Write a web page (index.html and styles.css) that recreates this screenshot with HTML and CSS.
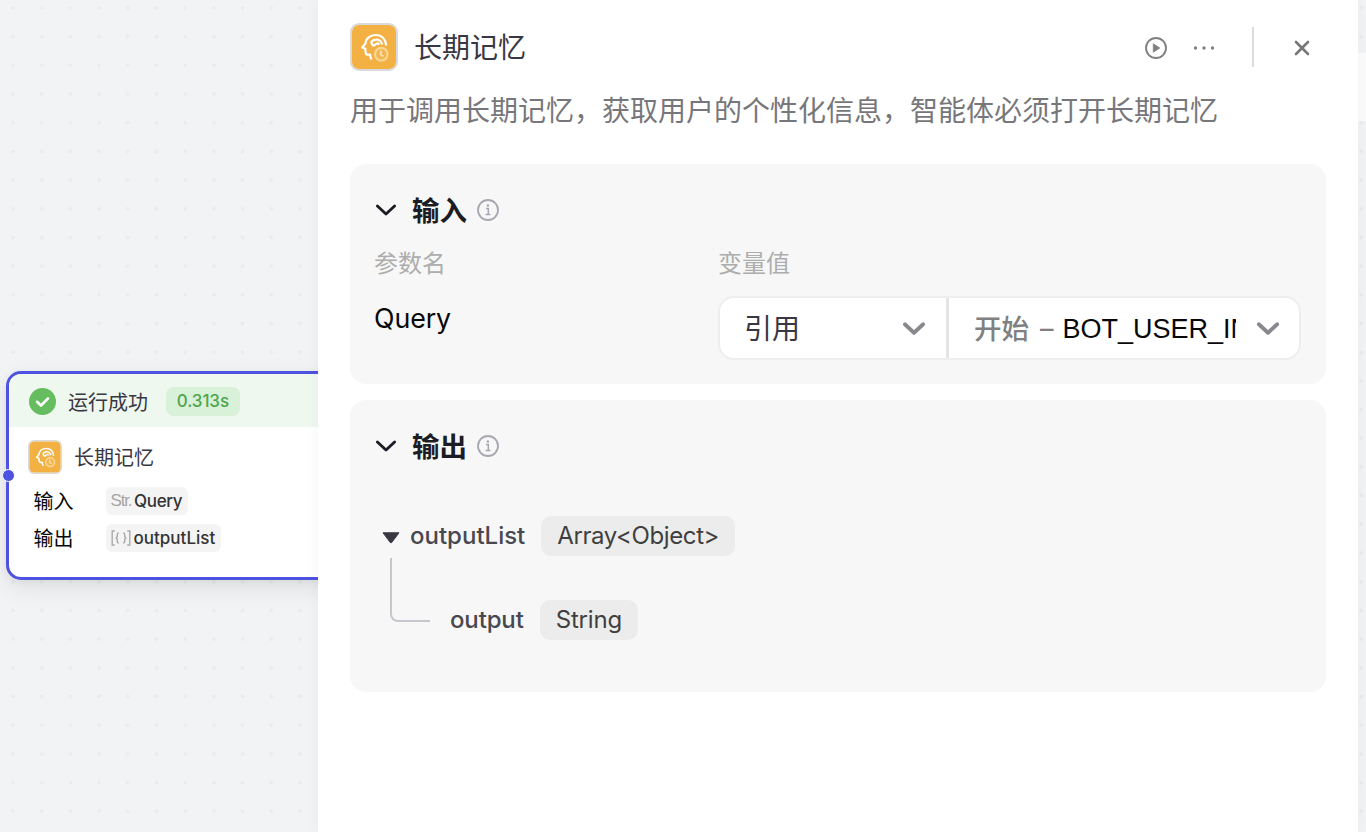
FILE: index.html
```html
<!DOCTYPE html>
<html lang="zh-CN">
<head>
<meta charset="utf-8">
<title>长期记忆</title>
<link rel="stylesheet" href="styles.css">
</head>
<body>
<svg width="0" height="0" class="defs">
  <symbol id="memory" viewBox="0 0 48 48">
    <rect x="1" y="1" width="46" height="46" rx="8" fill="#fff" stroke="#d9dadd" stroke-width="2"/>
    <rect x="2" y="2" width="44" height="44" rx="7" fill="#f2b142"/>
    <g fill="none" stroke="#fff" stroke-width="2.2" stroke-linejoin="round">
      <path d="M36.300 22.500C35.500 16 31.500 12 25.800 12C20 12 15.800 15.500 15.500 20.500L12.200 24.500L15.300 25.700L15.700 30Q15.900 31.600 17.500 31.600H20L21.300 36.500"/>
      <path d="M23.800 23C21 21 20.500 18.500 23.500 17.300C27.500 15.600 31 17 32.300 21.500"/>
      <path d="M23.600 23L26.200 20.800Q27.800 19.900 29.300 21.500"/>
    </g>
    <circle cx="31.300" cy="31.200" r="6.300" fill="#f3b750" stroke="#f9d698" stroke-width="2.200"/>
    <path d="M30.800 27.800V31.800L33.300 33.300" fill="none" stroke="#fbe0b0" stroke-width="1.800"/>
  </symbol>
  <symbol id="info" viewBox="0 0 22 22">
    <circle cx="11" cy="11" r="10" fill="none" stroke="#a7a7b0" stroke-width="1.800"/>
    <path d="M9 9.500H11.300V15.500M8.600 15.500H13.400" fill="none" stroke="#a7a7b0" stroke-width="1.500"/>
    <circle cx="10.900" cy="6.500" r="1.200" fill="#a7a7b0"/>
  </symbol>
  <symbol id="chevron" viewBox="0 0 24 16"><path d="M3.400 4L12 12L20.600 4" fill="none" stroke="currentColor" stroke-linecap="round" stroke-linejoin="round"/></symbol>
</svg>
<div class="canvas">
  <div class="side-card"></div>
  <div class="node">
    <div class="node-status">
      <svg class="ok" viewBox="0 0 26 26"><circle cx="13" cy="13" r="13" fill="#65bd60"/><path d="M7.800 13.300L11.500 17L18.300 10" fill="none" stroke="#fff" stroke-width="2.600" stroke-linecap="round" stroke-linejoin="round"/></svg>
      <span class="status-text">运行成功</span>
      <span class="time">0.313s</span>
    </div>
    <div class="node-head"><svg class="node-icon"><use href="#memory"/></svg><span class="node-name">长期记忆</span></div>
    <div class="node-row"><span class="node-label">输入</span><span class="tag tag-query"><span class="kind-str">Str.</span><span>Query</span></span></div>
    <div class="node-row"><span class="node-label">输出</span><span class="tag"><svg class="kind-arr" viewBox="0 0 20 16"><path d="M3.800 1H1.200V15H3.800M16.200 1H18.800V15H16.200M7.800 3Q6.300 3 6.300 4.500V6.500L5.200 8L6.300 9.500V11.500Q6.300 13 7.800 13M12.200 3Q13.700 3 13.700 4.500V6.500L14.800 8L13.700 9.500V11.500Q13.700 13 12.200 13"/></svg><span>outputList</span></span></div>
    <i class="port"></i>
  </div>
</div>
<main class="panel">
  <header class="head">
    <svg class="head-icon"><use href="#memory"/></svg>
    <h1>长期记忆</h1>
    <svg class="play" viewBox="0 0 22 22"><circle cx="11" cy="11" r="10" fill="none" stroke="#808080" stroke-width="1.900"/><path d="M8.300 6.800V15.200L14.800 11Z" fill="#808080" stroke="#808080" stroke-width=".8" stroke-linejoin="round"/></svg>
    <svg class="more" viewBox="0 0 22 6"><g fill="#808080"><circle cx="2.500" cy="3" r="1.700"/><circle cx="11" cy="3" r="1.700"/><circle cx="19.500" cy="3" r="1.700"/></g></svg>
    <i class="divider"></i>
    <svg class="close" viewBox="0 0 16 16"><path d="M2 2L14 14M14 2L2 14" stroke="#777" stroke-width="2.600" stroke-linecap="round"/></svg>
  </header>
  <p class="desc">用于调用长期记忆，获取用户的个性化信息，智能体必须打开长期记忆</p>
  <section class="card card-in">
    <div class="card-title"><svg class="chev"><use href="#chevron"/></svg><h2>输入</h2><svg class="info"><use href="#info"/></svg></div>
    <div class="cols labels"><span>参数名</span><span>变量值</span></div>
    <div class="cols">
      <span class="param">Query</span>
      <div class="field">
        <div class="sel sel-a"><span class="ref">引用</span><svg class="drop"><use href="#chevron"/></svg></div>
        <div class="sel sel-b"><span class="val"><b>开始</b><em>–</em><span class="var">BOT_USER_IN</span></span><svg class="drop"><use href="#chevron"/></svg></div>
      </div>
    </div>
  </section>
  <section class="card card-out">
    <div class="card-title"><svg class="chev"><use href="#chevron"/></svg><h2>输出</h2><svg class="info"><use href="#info"/></svg></div>
    <div class="tree-row"><svg class="tri" viewBox="0 0 18 12"><path d="M1 .8H17L9.700 10.500Q9 11.300 8.300 10.500Z" fill="#383743" stroke="#383743" stroke-linejoin="round"/></svg><span class="name">outputList</span><span class="type type-arr"><span>Array&lt;Object&gt;</span></span></div>
    <div class="tree-child"><i class="branch"></i><span class="name name-out">output</span><span class="type type-str"><span>String</span></span></div>
  </section>
</main>
</body>
</html>
```
FILE: styles.css
```css
* { box-sizing: border-box; }
body { margin: 0; width: 1366px; height: 832px; overflow: hidden; position: relative; font-family: Inter, "Noto Sans CJK SC", sans-serif; font-weight: 400; color: #383743; }
h1, h2, p { margin: 0; }
svg { display: block; flex: none; }
span { white-space: nowrap; }
.defs { position: absolute; }
.canvas { position: absolute; inset: 0; background: radial-gradient(circle, #eaebed 1.800px, transparent 2.200px) -1.300px -6.400px / 28.700px 28.700px #f1f3f5; }
.side-card { position: absolute; right: 0; top: 53px; width: 20px; height: 68px; background: #fcfcfc; }

.node { position: absolute; left: 6.400px; top: 371px; width: 500px; height: 209px; border: 3px solid #4d53e0; border-radius: 15px; background: #fff; box-shadow: 0 8px 24px rgba(0,0,0,.08), 0 2px 8px rgba(0,0,0,.05); }
.node-status { display: flex; align-items: center; height: 53px; padding: 1px 0 0 19.500px; background: #eef8ef; border-radius: 12px 12px 0 0; }
.ok { width: 27px; height: 27px; }
.status-text { font-size: 20px; margin-left: 12px; padding-top: 1px; }
.time { margin-left: 18px; width: 74px; height: 29px; display: flex; align-items: center; justify-content: center; background: #d8f1d8; border-radius: 8px; color: #4fa54c; font-size: 17px; font-weight: 500; letter-spacing: -.1px; }
.node-head { display: flex; align-items: center; height: 34px; margin: 13px 0 13px 18.500px; gap: 12px; font-size: 20px; }
.node-name { padding-bottom: 1px; }
.node-icon { width: 34px; height: 34px; }
.node-row { display: flex; align-items: center; height: 28px; margin: 0 0 9px 24.200px; color: #080808; }
.node-label { width: 72px; font-size: 20px; padding-bottom: 2px; }
.tag { display: flex; align-items: center; height: 28px; padding: 0 6px 0 5px; background: #f4f4f4; border-radius: 6px; font-size: 17px; font-weight: 500; color: #333; }
.tag-query { letter-spacing: -.35px; }
.kind-str { width: 23.500px; font-family: "Liberation Sans", sans-serif; font-weight: 400; color: #a6a6a6; font-size: 17px; letter-spacing: -1.200px; }
.kind-arr { width: 20px; height: 16px; margin-right: 3px; fill: none; stroke: #aaa; stroke-width: 1.400; }
.port { position: absolute; left: -7px; top: 95px; width: 13px; height: 13px; border-radius: 50%; background: #4d53e0; border: 1px solid #fff; }

.panel { position: absolute; left: 318px; top: 0; width: 1040px; height: 832px; padding: 23px 32px; background: #fff; box-shadow: 0 0 16px rgba(0,0,0,.04); }
.head { display: flex; align-items: center; height: 48px; padding-right: 16px; }
.head-icon { width: 48px; height: 48px; }
h1 { font-size: 28px; font-weight: 400; line-height: 48px; padding-top: 2px; margin-left: 16px; margin-right: auto; }
.play { width: 22px; height: 22px; margin-top: 2px; }
.more { width: 22px; height: 6px; margin: 2px 0 0 26px; }
.divider { width: 2px; height: 40px; margin: 0 40px 0 37px; background: #dcdcdc; }
.close { width: 16px; height: 16px; margin-top: 2px; }
.desc { font-size: 28px; line-height: 40px; margin-top: 20px; color: #77777b; white-space: nowrap; }
.card { background: #f7f7f7; border-radius: 16px; padding: 24px; }
.card-in { height: 220px; margin-top: 33px; }
.card-out { height: 292px; margin-top: 16px; }
.card-title { display: flex; align-items: center; height: 44px; }
.chev { width: 24px; height: 16px; margin-right: 14px; color: #1c1c24; stroke-width: 2.900; }
h2 { font-size: 27.500px; font-weight: 700; color: #1c1c24; padding-bottom: 3px; }
.info { width: 22px; height: 22px; margin-left: 10px; }
.cols { display: grid; grid-template-columns: 344px 584px; }
.labels { height: 36px; margin: 14px 0; font-size: 24px; line-height: 36px; color: #adadad; }
.param { font-size: 26.800px; line-height: 44px; color: #080808; letter-spacing: -.1px; }
.field { display: flex; width: 583px; height: 64px; border: 2px solid #eee; border-radius: 16px; background: #fff; }
.sel { display: flex; align-items: center; justify-content: space-between; height: 60px; padding: 0 19px 0 24px; font-size: 28px; }
.ref { padding-bottom: 2px; }
.sel-a { width: 229px; border-right: 3px solid #e4e4e4; }
.sel-b { flex: 1; color: #080808; padding: 0 18px 0 25px; }
.val { display: flex; align-items: center; width: 262px; overflow: hidden; font-size: 27px; }
.val b { font-size: 27.500px; font-weight: 500; color: #808080; padding-bottom: 3px; }
.val em { font-style: normal; color: #808080; margin: 0 9px 0 11px; }
.var { font-family: "Liberation Sans", sans-serif; font-size: 27px; padding-top: 2px; }
.drop { width: 26px; height: 17px; color: #88888f; stroke-width: 3.600; }
.tree-row { display: flex; align-items: center; height: 40px; margin-top: 48px; padding-left: 8px; font-size: 24px; }
.tri { width: 18px; height: 12px; margin-right: 10px; margin-top: 3px; }
.name { font-weight: 500; color: #484850; padding-bottom: 1px; }
.name-out { letter-spacing: -.15px; }
.type { display: flex; align-items: center; height: 40px; padding: 0 16px; margin-left: 16px; border-radius: 10px; background: #ececec; color: #3f3f3f; }
.type span { padding-bottom: 2px; }
.type-arr { letter-spacing: -.4px; }
.type-str { letter-spacing: -.15px; }
.tree-child { display: flex; align-items: flex-end; height: 84px; padding-left: 16px; font-size: 24px; }
.tree-child .name { line-height: 40px; padding: 0; }
.branch { width: 40px; height: 64px; border-left: 2px solid #c6c6cd; border-bottom: 2px solid #c6c6cd; border-radius: 0 0 0 8px; margin: 0 20px 18px 0; }
```
